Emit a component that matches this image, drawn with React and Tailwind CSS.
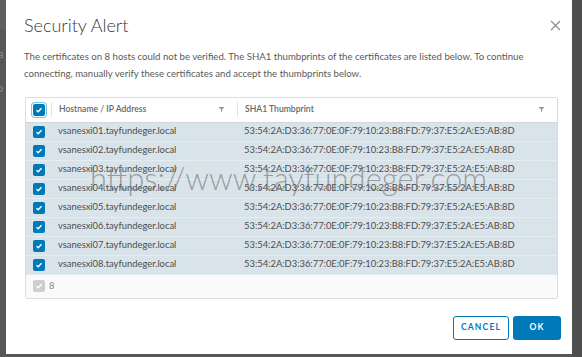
import React from 'react';

const hosts = [1, 2, 3, 4, 5, 6, 7, 8].map((n) => `vsanesxi0${n}.tayfundeger.local`);
const thumb = '53:54:2A:D3:36:77:0E:0F:79:10:23:B8:FD:79:37:E5:2A:E5:AB:8D';

const Check = ({ disabled }) => (
  <span
    className={`w-[12px] h-[12px] rounded-[2px] flex items-center justify-center ${
      disabled ? 'bg-[#cfcfcf]' : 'bg-[#0079b8]'
    }`}
  >
    <svg width="8" height="8" viewBox="0 0 8 8">
      <path d="M1.5 4.2 L3.2 5.8 L6.5 2.2" fill="none" stroke="white" strokeWidth="1.4" />
    </svg>
  </span>
);

const Funnel = () => (
  <svg width="7" height="7" viewBox="0 0 7 7">
    <path d="M0.5 1 H6.5 L4 3.8 V6 L3 5.4 V3.8 Z" fill="#9a9a9a" />
  </svg>
);

export default function App() {
  return (
    <div
      className="w-[582px] h-[357px] bg-[#575757] flex overflow-hidden relative"
      style={{ fontFamily: 'Lato, "Open Sans", sans-serif' }}
    >
      {/* page behind the overlay */}
      <div className="w-[6px] flex flex-col text-[11px] text-[#8a8a8a] leading-none">
        <div className="h-[30px] bg-[#5f5f5f]" />
        <div className="h-[18px]" />
        <div className="h-[12px] -ml-[2px]">a</div>
        <div className="h-[22px]" />
        <div className="h-[12px] -ml-[3px]">o</div>
      </div>

      {/* modal */}
      <div className="w-[566px] h-[354px] bg-white flex flex-col pl-[18px] pr-[14px]">
        <div className="flex items-center justify-between h-[48px] pt-[2px]">
          <h1 className="text-[18px] font-light text-[#3a3a3a]">Security Alert</h1>
          <svg width="11" height="11" viewBox="0 0 11 11" className="mr-[-3px]">
            <path d="M1 1 L10 10 M10 1 L1 10" stroke="#8c8c8c" strokeWidth="1.2" />
          </svg>
        </div>

        <p className="text-[9.6px] leading-[17px] text-[#5a5a5a] mt-[-0.5px]">
          The certificates on 8 hosts could not be verified. The SHA1 thumbprints of the certificates are listed below. To continue
          <br />
          connecting, manually verify these certificates and accept the thumbprints below.
        </p>

        <div className="mt-[15px] ml-[1px] border border-[#dcdcdc] rounded-[2px] flex flex-col">
          <div className="h-[25px] flex items-center text-[8.6px] font-semibold text-[#666] border-b border-[#d6d6d6] bg-white">
            <div className="w-[25px] flex justify-center pl-[1px]">
              <span className="w-[14px] h-[14px] rounded-[3px] ring-1 ring-[#7ec4e8] flex items-center justify-center">
                <Check />
              </span>
            </div>
            <div className="w-px h-[15px] bg-[#e2e2e2]" />
            <div className="w-[185px] flex items-center justify-between pl-[7px] pr-[12px]">
              <span>Hostname / IP Address</span>
              <Funnel />
            </div>
            <div className="w-px h-[15px] bg-[#e2e2e2]" />
            <div className="flex-1 flex items-center justify-between pl-[7px] pr-[12px]">
              <span>SHA1 Thumbprint</span>
              <Funnel />
            </div>
          </div>

          {hosts.map((h) => (
            <div
              key={h}
              className="h-[19px] flex items-center bg-[#d9e4ea] border-b border-[#e6edf1] last:border-b-[#c9d3d9] text-[9.4px] text-[#4d4d4d]"
            >
              <div className="w-[25px] flex justify-center pl-[1px]">
                <Check />
              </div>
              <div className="w-[193px] pl-[7px]">{h}</div>
              <div className="flex-1 pl-[0px]">{thumb}</div>
            </div>
          ))}

          <div className="h-[23px] flex items-center bg-[#fafafa] text-[9.4px] text-[#888]">
            <div className="w-[25px] flex justify-center pl-[1px]">
              <Check disabled />
            </div>
            <span className="ml-[-2px]">8</span>
          </div>
        </div>

        <div className="flex justify-end gap-[4px] mt-[17px] mr-[-3px]">
          <button className="w-[56px] h-[24px] rounded-[3px] border border-[#0079b8] text-[#0079b8] text-[8.5px] font-bold tracking-[1.2px] bg-white">
            CANCEL
          </button>
          <button className="w-[48px] h-[24px] rounded-[3px] bg-[#0079b8] text-white text-[8.5px] font-bold tracking-[1.2px]">
            OK
          </button>
        </div>
      </div>

      <div className="w-[10px] bg-[#4e4e4e]" />

      {/* watermark */}
      <div className="absolute left-[90px] top-[155px] text-[31px] font-light text-[#6a6a6a]/60 pointer-events-none whitespace-nowrap">
        https://www.tayfundeger.com
      </div>
    </div>
  );
}
